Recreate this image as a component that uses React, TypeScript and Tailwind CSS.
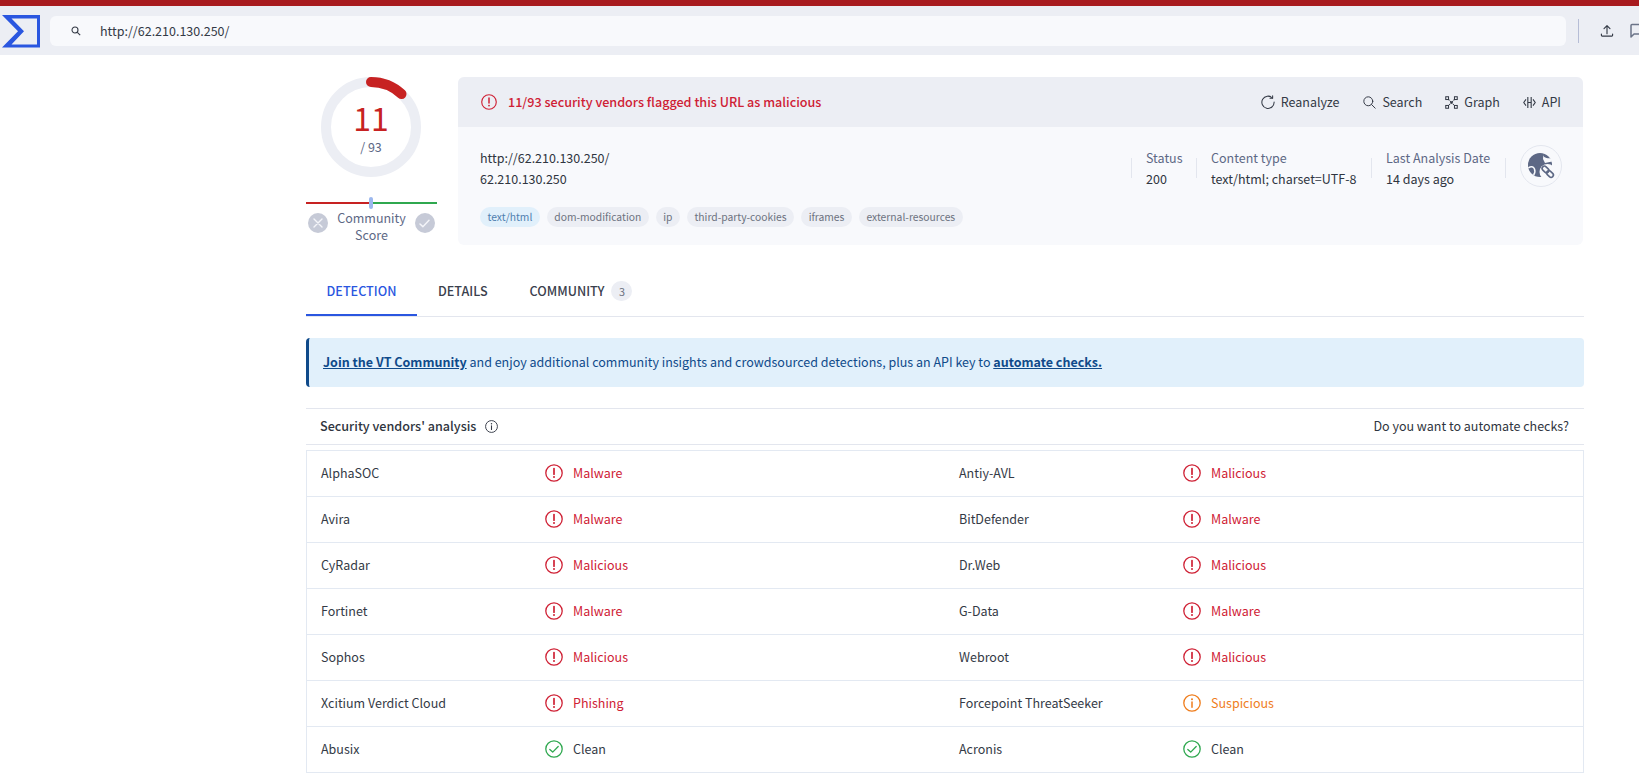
import React from "react";

const font = { fontFamily: '"Noto Sans CJK SC", "Noto Sans", sans-serif' };

function AlertIcon({ className = "w-[18px] h-[18px]" }: { className?: string }) {
  return (
    <svg viewBox="0 0 18 18" className={className} fill="none" stroke="currentColor">
      <circle cx="9" cy="9" r="8.2" strokeWidth="1.3" />
      <path d="M9 4.6v5.6" strokeWidth="1.7" strokeLinecap="round" />
      <circle cx="9" cy="13" r="1" fill="currentColor" stroke="none" />
    </svg>
  );
}
function InfoIcon({ className = "w-[18px] h-[18px]" }: { className?: string }) {
  return (
    <svg viewBox="0 0 18 18" className={className} fill="none" stroke="currentColor">
      <circle cx="9" cy="9" r="8.2" strokeWidth="1.3" />
      <path d="M9 8v5.2" strokeWidth="1.5" strokeLinecap="round" />
      <circle cx="9" cy="5.2" r="1" fill="currentColor" stroke="none" />
    </svg>
  );
}
function CheckIcon({ className = "w-[18px] h-[18px]" }: { className?: string }) {
  return (
    <svg viewBox="0 0 18 18" className={className} fill="none" stroke="currentColor">
      <circle cx="9" cy="9" r="8.2" strokeWidth="1.3" />
      <path d="M4.8 9.4l2.9 2.7 5.5-5.6" strokeWidth="1.3" strokeLinecap="round" strokeLinejoin="round" />
    </svg>
  );
}

type Status = "Malware" | "Malicious" | "Phishing" | "Suspicious" | "Clean";

function Verdict({ status }: { status: Status }) {
  if (status === "Clean")
    return (
      <div className="flex items-center gap-[10px] text-[#343a46]">
        <CheckIcon className="w-[18px] h-[18px] text-[#2fa84f]" />
        <span>{status}</span>
      </div>
    );
  if (status === "Suspicious")
    return (
      <div className="flex items-center gap-[10px] text-[#ef7d1c]">
        <InfoIcon />
        <span>{status}</span>
      </div>
    );
  return (
    <div className="flex items-center gap-[10px] text-[#cf2135]">
      <AlertIcon />
      <span>{status}</span>
    </div>
  );
}

const rows: [string, Status, string, Status][] = [
  ["AlphaSOC", "Malware", "Antiy-AVL", "Malicious"],
  ["Avira", "Malware", "BitDefender", "Malware"],
  ["CyRadar", "Malicious", "Dr.Web", "Malicious"],
  ["Fortinet", "Malware", "G-Data", "Malware"],
  ["Sophos", "Malicious", "Webroot", "Malicious"],
  ["Xcitium Verdict Cloud", "Phishing", "Forcepoint ThreatSeeker", "Suspicious"],
  ["Abusix", "Clean", "Acronis", "Clean"],
];

const tags = ["dom-modification", "ip", "third-party-cookies", "iframes", "external-resources"];

function Meta({ label, value, className }: { label: string; value: string; className: string }) {
  return (
    <div className={`flex items-center mt-[3px] ${className}`}>
      <div className="w-px h-[20px] bg-[#e3e6ee] shrink-0" />
      <div className="pl-[14px] whitespace-nowrap leading-[21px]">
        <div className="text-[#5d6885]">{label}</div>
        <div className="text-[#2f3540]">{value}</div>
      </div>
    </div>
  );
}

export default function App() {
  return (
    <div style={font} className="w-[1639px] h-[775px] overflow-hidden bg-white text-[12.5px] leading-[20px] text-[#343a46]">
      <div className="h-[6px] bg-[#a81b1f]" />
      <header className="h-[49px] bg-[#eceef4] flex items-center">
        <svg viewBox="0 0 42 36" className="w-[42px] h-[36px] ml-0 shrink-0 -mt-[1px]">
          <path
            fillRule="evenodd"
            fill="#2a56e0"
            d="M2 3H40V35.5H2L18 19.2ZM11.5 6.5L24 19.2L11.5 32.5H37V6.5Z"
          />
        </svg>
        <div className="ml-[8px] w-[1516px] h-[30px] bg-[#f8f9fc] rounded-[6px] flex items-center shrink-0">
          <svg viewBox="0 0 12 12" className="ml-[21px] w-[10px] h-[10px] text-[#343a46]" fill="none" stroke="currentColor" strokeWidth="1.3">
            <circle cx="4.8" cy="4.8" r="3.6" />
            <path d="M7.6 7.6L11 11" />
          </svg>
          <span className="ml-[19px] text-[#343a46]">http://62.210.130.250/</span>
        </div>
        <div className="ml-[12px] w-px h-[24px] bg-[#b6bdd6] shrink-0" />
        <svg viewBox="0 0 16 16" className="ml-[21px] w-[14px] h-[14px] shrink-0 text-[#343a46]" fill="none" stroke="currentColor" strokeWidth="1.3" strokeLinecap="round" strokeLinejoin="round">
          <path d="M8 11V2M4.6 5.2L8 1.8l3.4 3.4M1.6 11.5v1.4c0 .6.3.9.9.9h11c.6 0 .9-.3.9-.9v-1.4" />
        </svg>
        <svg viewBox="0 0 16 16" className="ml-[16px] w-[16px] h-[16px] shrink-0 text-[#6b7488]" fill="none" stroke="currentColor" strokeWidth="1.5">
          <path d="M1 14V2.5C1 2 1.4 1.5 2 1.5H15V11H4Z" strokeLinejoin="round" />
        </svg>
      </header>

      <main className="ml-[306px] w-[1278px]">
        <section className="flex pt-[22px]">
          <div className="w-[131px] shrink-0 flex flex-col items-center">
            <div className="relative w-[100px] h-[100px] -ml-[1px]">
              <svg viewBox="0 0 100 100" className="w-[100px] h-[100px]" fill="none">
                <circle cx="50" cy="50" r="45" stroke="#eceef4" strokeWidth="10" />
                <path d="M50 5A45 45 0 0 1 80.5 17" stroke="#c72222" strokeWidth="10" strokeLinecap="round" />
              </svg>
              <div className="absolute inset-0 flex flex-col items-center">
                <div className="mt-[20px] text-[32px] leading-[40px] text-[#c72222]">11</div>
                <div className="mt-[1px] leading-[18px] text-[#5d6885]">/ 93</div>
              </div>
            </div>
            <div className="relative w-[131px] h-[2px] mt-[25px] bg-[linear-gradient(to_right,#c72222_0,#c72222_49%,#2fa84f_49%,#2fa84f_100%)]">
              <div className="absolute left-[63px] -top-[5px] w-[4px] h-[12px] rounded-[2px] bg-[#9cb8ee]" />
            </div>
            <div className="w-full flex items-start justify-between px-[2px]">
              <div className="mt-[9px] w-[20px] h-[20px] rounded-full bg-[#c6cad7] flex items-center justify-center">
                <svg viewBox="0 0 10 10" className="w-[10px] h-[10px]" fill="none" stroke="#f4f5f9" strokeWidth="1.4" strokeLinecap="round">
                  <path d="M1 1l8 8M9 1l-8 8" />
                </svg>
              </div>
              <div className="mt-[5px] text-center leading-[17px] text-[#5d6885]">Community<br />Score</div>
              <div className="mt-[9px] w-[20px] h-[20px] rounded-full bg-[#c6cad7] flex items-center justify-center">
                <svg viewBox="0 0 12 10" className="w-[11px] h-[9px]" fill="none" stroke="#f4f5f9" strokeWidth="1.6" strokeLinecap="round" strokeLinejoin="round">
                  <path d="M1 5.5l3.2 3L11 1.5" />
                </svg>
              </div>
            </div>
          </div>

          <div className="ml-[21px] w-[1125px] h-[168px] rounded-[6px] overflow-hidden bg-[#f8f9fc]">
            <div className="h-[50px] bg-[#eceef4] flex items-center pl-[23px] pr-[22px]">
              <AlertIcon className="w-[16px] h-[16px] text-[#cf2135]" />
              <span className="ml-[11px] font-medium text-[12.6px] text-[#cf2135]">11/93 security vendors flagged this URL as malicious</span>
              <div className="ml-auto flex items-center text-[#343a46]">
                <svg viewBox="0 0 16 16" className="w-[14px] h-[14px]" fill="none" stroke="currentColor" strokeWidth="1.2" strokeLinecap="round">
                  <path d="M13 3.4A7 7 0 1 0 15 8" />
                  <path d="M13.3 .8v3h-3" strokeLinejoin="round" />
                </svg>
                <span className="ml-[6px]">Reanalyze</span>
                <svg viewBox="0 0 16 16" className="ml-[24px] w-[13px] h-[13px]" fill="none" stroke="currentColor" strokeWidth="1.2" strokeLinecap="round">
                  <circle cx="6.5" cy="6.5" r="5.5" />
                  <path d="M10.5 10.5L15 15" />
                </svg>
                <span className="ml-[6px]">Search</span>
                <svg viewBox="0 0 14 14" className="ml-[23px] w-[13px] h-[13px]" fill="none" stroke="currentColor" strokeWidth="1.1">
                  <rect x=".8" y=".8" width="3" height="3" />
                  <rect x="10.2" y=".8" width="3" height="3" />
                  <rect x=".8" y="10.2" width="3" height="3" />
                  <rect x="10.2" y="10.2" width="3" height="3" />
                  <circle cx="7" cy="7" r="1.3" fill="currentColor" stroke="none" />
                  <path d="M4 4l6 6M10 4l-6 6" strokeDasharray="1.2 1" />
                </svg>
                <span className="ml-[6px]">Graph</span>
                <svg viewBox="0 0 14 14" className="ml-[23px] w-[13px] h-[13px]" fill="none" stroke="currentColor" strokeWidth="1.2" strokeLinejoin="round">
                  <path d="M5.2 1v12M8.8 1v12M5.2 7h3.6" />
                  <path d="M3.2 3.6L.8 7l2.4 3.4M10.8 3.6L13.2 7l-2.4 3.4" />
                </svg>
                <span className="ml-[6px]">API</span>
              </div>
            </div>
            <div className="h-[118px] pl-[22px] pr-[21px] pt-[18px] flex items-start justify-between">
              <div>
                <div className="pt-[2px] leading-[21px] text-[#2f3540]">
                  <div>http://62.210.130.250/</div>
                  <div>62.210.130.250</div>
                </div>
                <div className="flex gap-[7px] mt-[18px] text-[10.3px] leading-[20px]">
                  <span className="px-[7.5px] rounded-full bg-[#e1f0fb] text-[#4f7fb0]">text/html</span>
                  {tags.map((t) => (
                    <span key={t} className="px-[7.5px] rounded-full bg-[#eceef4] text-[#6d7280]">{t}</span>
                  ))}
                </div>
              </div>
              <div className="flex items-center h-[42px]">
                <Meta label="Status" value="200" className="w-[65px]" />
                <Meta label="Content type" value="text/html; charset=UTF-8" className="w-[175px]" />
                <Meta label="Last Analysis Date" value="14 days ago" className="w-[134px]" />
                <div className="w-px h-[20px] mt-[3px] bg-[#e3e6ee]" />
                <div className="ml-[14px] w-[42px] h-[42px] rounded-full border border-[#e3e6ee] flex items-center justify-center">
                  <svg viewBox="0 0 30 30" className="w-[30px] h-[30px]">
                    <circle cx="14" cy="14" r="12" fill="#5d6885" />
                    <path d="M2.4 17c2.6-2 5-1.4 6 .8s.4 4.4-.8 6.2" fill="none" stroke="#f8f9fc" strokeWidth="1.5" />
                    <path d="M17.5 2.4c-.6 1.6.2 3.4 1.8 4.2s3.4.6 5.7.9l1 3-7 1.5-2-4z" fill="#f8f9fc" />
                    <circle cx="21.5" cy="21" r="8" fill="#f8f9fc" />
                    <g fill="none" stroke="#5d6885" strokeWidth="1.6">
                      <rect x="15.7" y="16.2" width="7.6" height="4.6" rx="2.3" transform="rotate(45 19.5 18.5)" />
                      <rect x="20.2" y="20.7" width="7.6" height="4.6" rx="2.3" transform="rotate(45 24 23)" />
                    </g>
                  </svg>
                </div>
              </div>
            </div>
          </div>
        </section>

        <nav className="mt-[25px] h-[47px] border-b border-[#e3e6ee] flex font-medium text-[12.6px]">
          <div className="w-[111px] h-[46px] border-b-[2px] border-[#2a56e0] text-[#2a56e0] flex items-center justify-center pb-[3px]">DETECTION</div>
          <div className="ml-[21px] h-[42px] text-[#3a404d] flex items-center">DETAILS</div>
          <div className="ml-[42px] h-[42px] text-[#3a404d] flex items-center">
            COMMUNITY
            <span className="ml-[7px] w-[21px] h-[20px] rounded-full bg-[#eceef4] text-[10.8px] font-normal text-[#6d7280] flex items-center justify-center">3</span>
          </div>
        </nav>

        <div className="mt-[21px] h-[49px] rounded-[4px] border-l-[3px] border-[#0f4a8a] bg-[#e1f0fb] flex items-center pl-[14px] pb-[1px] text-[#0f4a8a]">
          <span>
            <a className="font-bold underline">Join the VT Community</a> and enjoy additional community insights and crowdsourced detections, plus an API key to{" "}
            <a className="font-bold underline">automate checks.</a>
          </span>
        </div>

        <div className="mt-[21px] h-[37px] border-y border-[#e3e6ee] flex items-center justify-between pl-[14px] pr-[15px] pb-[1px]">
          <div className="flex items-center font-medium text-[12.6px] text-[#2f3540]">
            Security vendors' analysis
            <InfoIcon className="ml-[9px] w-[13px] h-[13px] text-[#343a46]" />
          </div>
          <div className="text-[#2f3540]">Do you want to automate checks?</div>
        </div>

        <div className="mt-[5px] border-l border-t border-[#e3e9f2]">
          {rows.map((r) => (
            <div key={r[0]} className="h-[46px] pb-[1px] border-b border-r border-[#e3e9f2] grid grid-cols-[238px_400px_238px_1fr] items-center leading-[18px]">
              <div className="pl-[14px]">{r[0]}</div>
              <Verdict status={r[1]} />
              <div className="pl-[14px]">{r[2]}</div>
              <Verdict status={r[3]} />
            </div>
          ))}
        </div>
      </main>
    </div>
  );
}
